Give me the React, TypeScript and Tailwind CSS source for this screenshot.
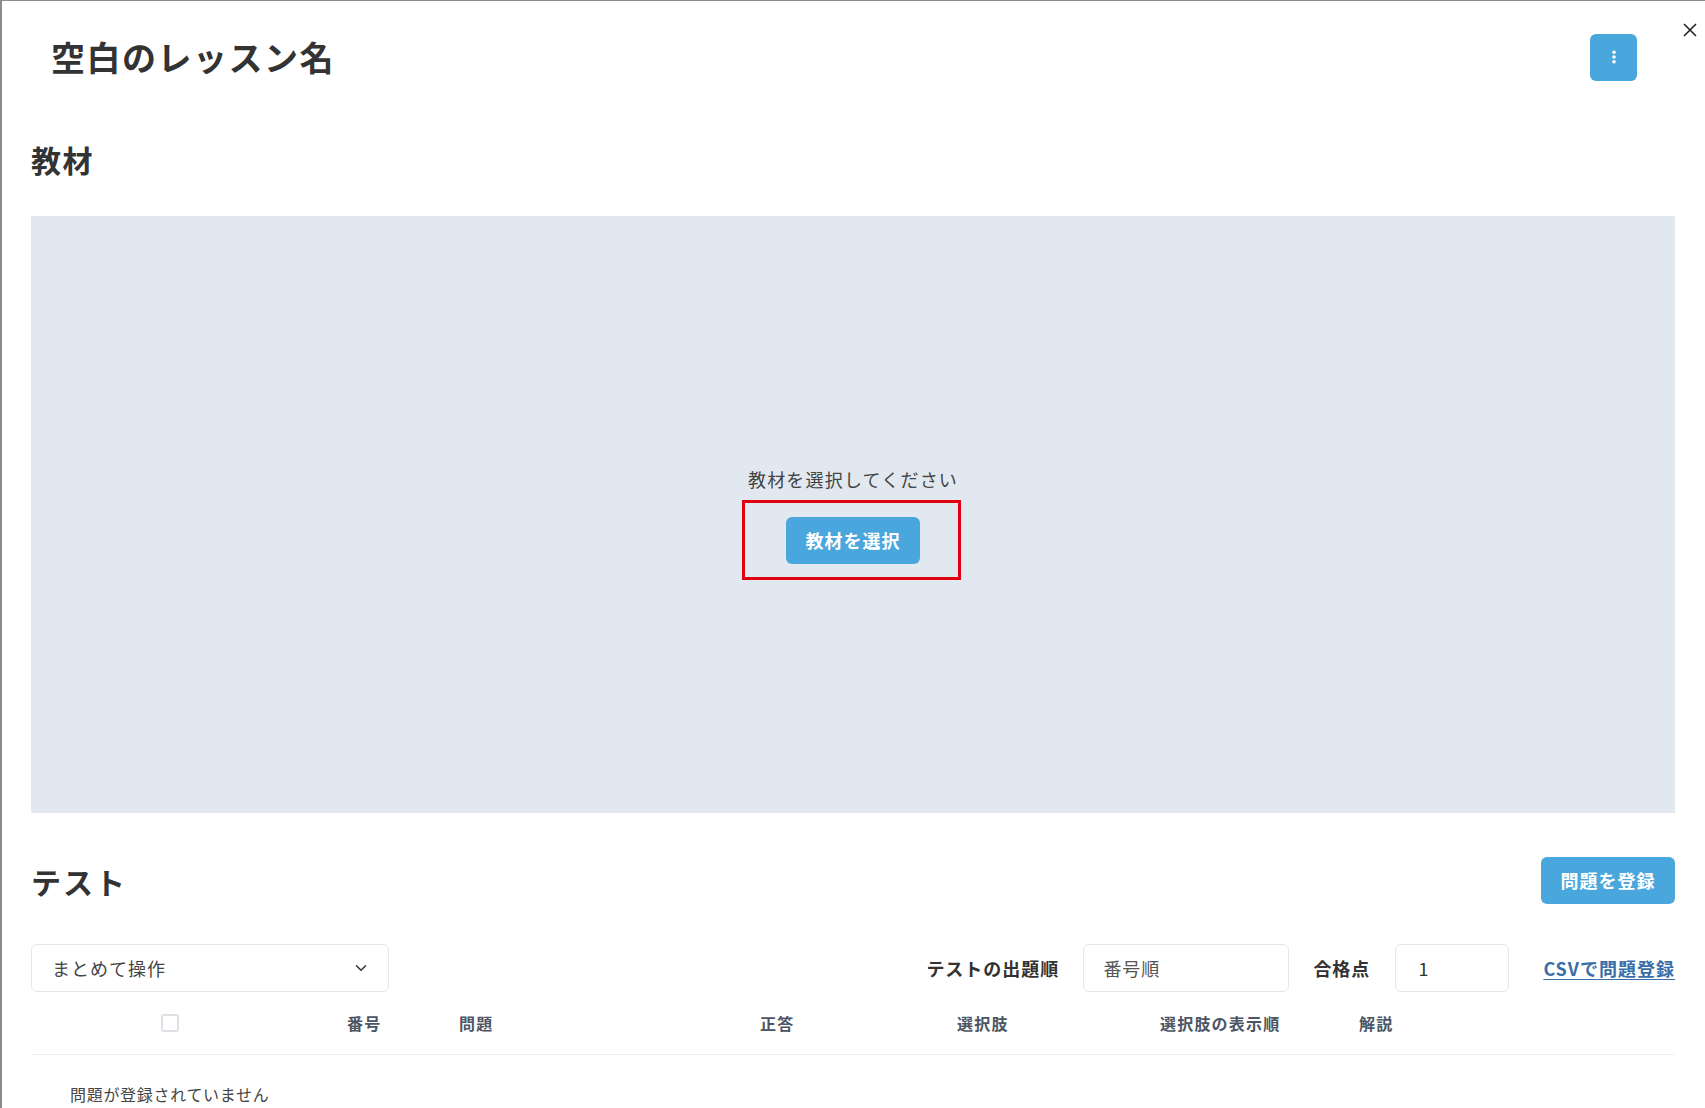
import { ChevronDown } from "lucide-react";

const font = { fontFamily: '"Noto Sans CJK JP", "Noto Sans", sans-serif' };

function KebabIcon() {
  return (
    <svg width="4" height="14" viewBox="0 0 4 14" fill="white" aria-hidden="true">
      <circle cx="2" cy="2.3" r="1.8" />
      <circle cx="2" cy="7" r="1.8" />
      <circle cx="2" cy="11.7" r="1.8" />
    </svg>
  );
}

function CloseIcon() {
  return (
    <svg width="14" height="14" viewBox="0 0 14 14" stroke="#222" strokeWidth="1.6" fill="none" aria-hidden="true">
      <path d="M1 1l12 12M13 1L1 13" />
    </svg>
  );
}

const columns = ["番号", "問題", "正答", "選択肢", "選択肢の表示順", "解説"];

export default function App() {
  return (
    <div
      className="relative w-[1705px] h-[1108px] overflow-hidden bg-white border-l-2 border-t border-[#8c8c8c] text-[#333]"
      style={font}
    >
      {/* close button */}
      <button className="absolute top-[22px] right-[8px] w-[14px] h-[14px] flex items-center justify-center">
        <CloseIcon />
      </button>

      {/* header */}
      <div className="h-[112px] flex items-center justify-between pl-[49px] pr-[68px]">
        <h1 className="text-[34px] leading-[40px] font-bold tracking-[1.5px] text-[#333]">空白のレッスン名</h1>
        <button className="w-[47px] h-[47px] rounded-md bg-[#4aa7dd] flex items-center justify-center">
          <KebabIcon />
        </button>
      </div>

      <div className="pl-[29px] pr-[30px]">
        {/* 教材 */}
        <h2 className="mt-[31px] text-[30px] leading-[30px] font-bold tracking-[1.5px] text-[#333]">教材</h2>
        <div className="mt-[42px] h-[597px] bg-[#e2e8f0] flex flex-col items-center justify-center gap-[24px]">
          <p className="text-[18px] leading-[27px] tracking-[1.2px] text-[#444]">教材を選択してください</p>
          <div className="relative">
            <span className="absolute -left-[44px] -right-[41px] -top-[17px] -bottom-[16px] border-[3px] border-[#e0000f] pointer-events-none" />
            <button className="w-[134px] h-[47px] rounded-md bg-[#4aa7dd] text-white text-[18px] font-bold tracking-[1px]">
              教材を選択
            </button>
          </div>
        </div>

        {/* テスト */}
        <div className="mt-[44px] h-[47px] flex items-center justify-between">
          <h2 className="text-[30px] leading-[30px] font-bold tracking-[2px] text-[#333]">テスト</h2>
          <button className="w-[134px] h-[47px] rounded-md bg-[#4aa7dd] text-white text-[18px] font-bold tracking-[1px]">
            問題を登録
          </button>
        </div>

        <div className="mt-[40px] h-[48px] flex items-center">
          <div className="w-[358px] h-[48px] rounded-md border border-[#e5e7eb] flex items-center justify-between pl-[20px] pr-[18px]">
            <span className="text-[18px] tracking-[1px] text-[#444]">まとめて操作</span>
            <ChevronDown size={18} strokeWidth={2} className="text-[#333]" />
          </div>
          <div className="ml-auto flex items-center">
            <span className="text-[18px] font-bold text-[#333] tracking-[1px]">テストの出題順</span>
            <div className="ml-[24px] w-[206px] h-[48px] rounded-md border border-[#e5e7eb] flex items-center pl-[19px] text-[18px] tracking-[1px] text-[#555]">
              番号順
            </div>
            <span className="ml-[24px] text-[18px] font-bold tracking-[1px] text-[#333]">合格点</span>
            <div className="ml-[25px] w-[114px] h-[48px] rounded-md border border-[#e5e7eb] flex items-center pl-[22px] text-[18px] text-[#333]">
              1
            </div>
            <a className="ml-[34px] text-[18px] font-bold tracking-[1px] text-[#3a6ea8] underline underline-offset-[3px]">
              CSVで問題登録
            </a>
          </div>
        </div>

        {/* question table */}
        <div className="h-[63px] grid grid-cols-[316px_112px_301px_197px_203px_199px_1fr] items-center border-b border-[#efefef]">
          <div className="pl-[130px]">
            <span className="block w-[18px] h-[18px] rounded-[3px] border-2 border-[#dde1e6] bg-white" />
          </div>
          {columns.map((c) => (
            <span key={c} className="text-[16px] font-bold tracking-[1.2px] text-[#4b5563]">
              {c}
            </span>
          ))}
        </div>
        <p className="pt-[27px] pl-[39px] text-[16px] leading-[24px] tracking-[0.7px] text-[#444]">問題が登録されていません</p>
      </div>
    </div>
  );
}
